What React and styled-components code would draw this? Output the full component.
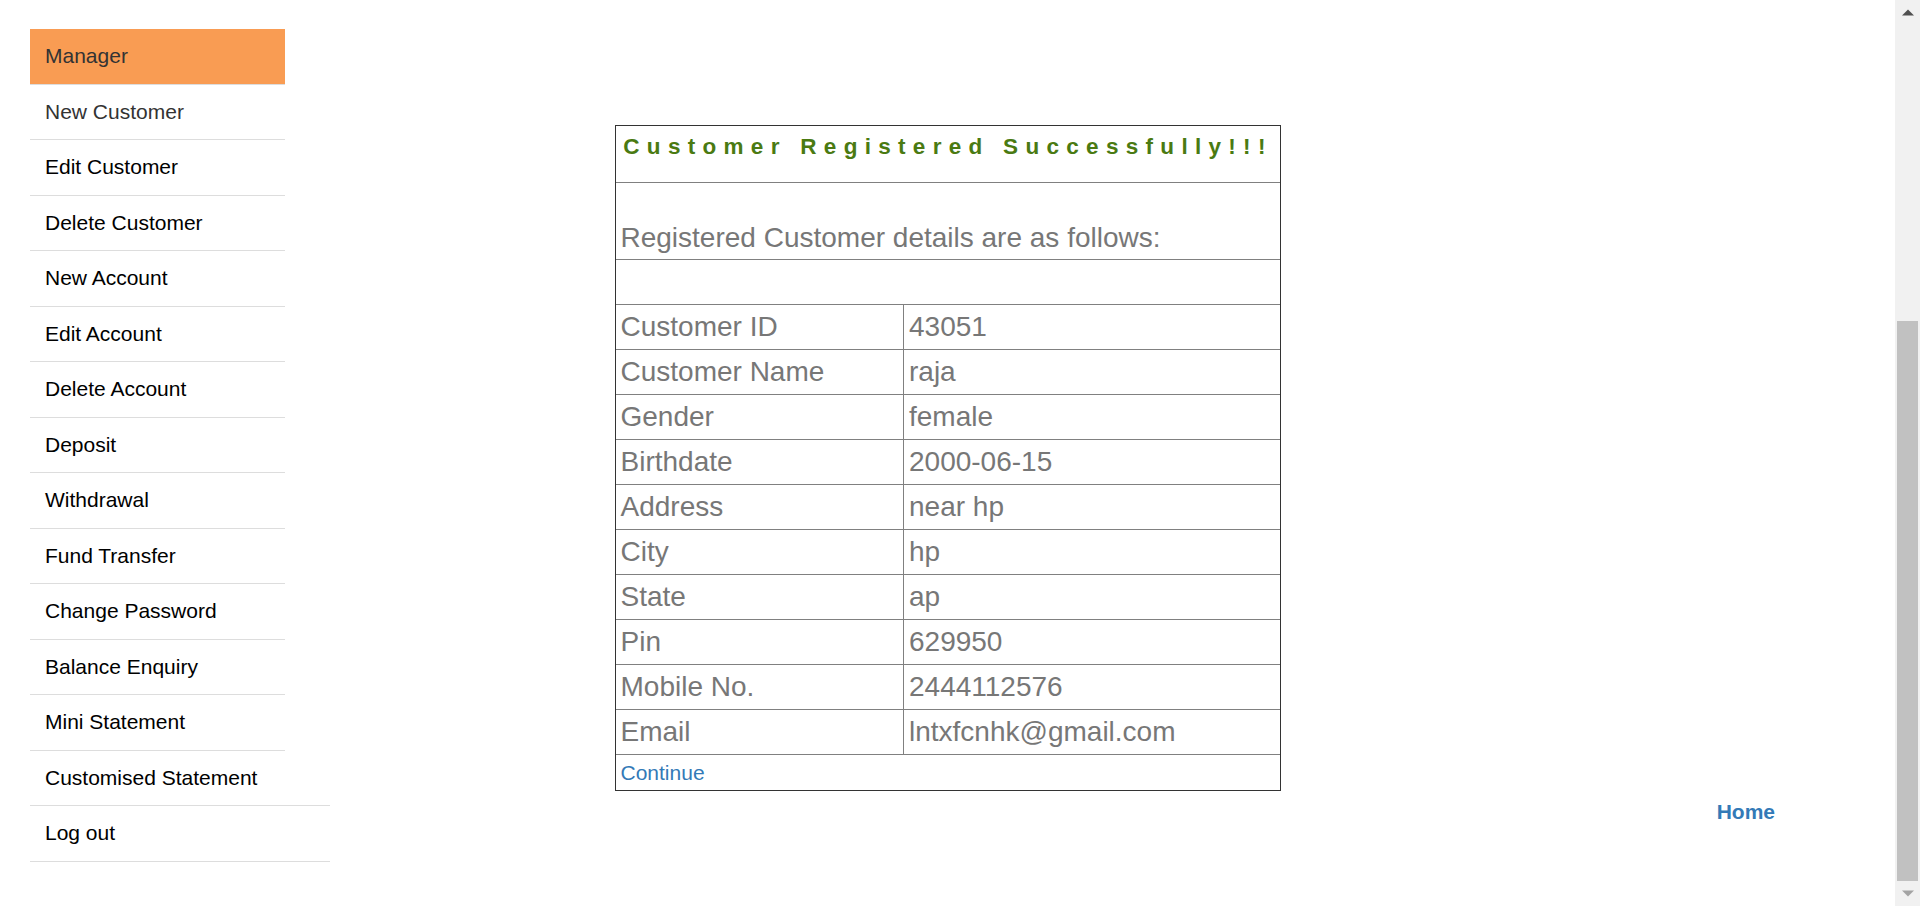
import React from 'react';
import styled, { createGlobalStyle } from 'styled-components';

const GlobalStyle = createGlobalStyle`
  html, body {
    margin: 0;
    padding: 0;
    background: #fff;
    overflow: hidden;
  }
  body {
    font-family: "Liberation Sans", Arial, sans-serif;
  }
`;

const menu = [
  'New Customer',
  'Edit Customer',
  'Delete Customer',
  'New Account',
  'Edit Account',
  'Delete Account',
  'Deposit',
  'Withdrawal',
  'Fund Transfer',
  'Change Password',
  'Balance Enquiry',
  'Mini Statement',
];

const details = [
  ['Customer ID', '43051'],
  ['Customer Name', 'raja'],
  ['Gender', 'female'],
  ['Birthdate', '2000-06-15'],
  ['Address', 'near hp'],
  ['City', 'hp'],
  ['State', 'ap'],
  ['Pin', '629950'],
  ['Mobile No.', '2444112576'],
  ['Email', 'lntxfcnhk@gmail.com'],
];

const App = () => {
  return (
    <>
      <GlobalStyle />
      <Page>
        <Sidebar>
          <MenuItem active>Manager</MenuItem>
          {menu.map((m, i) => (
            <MenuItem key={m} muted={i === 0}>{m}</MenuItem>
          ))}
          <MenuItem wide>Customised Statement</MenuItem>
          <MenuItem wide>Log out</MenuItem>
        </Sidebar>

        <Main>
          <Card>
            <TitleRow>Customer Registered Successfully!!!</TitleRow>
            <InfoRow>Registered Customer details are as follows:</InfoRow>
            <EmptyRow />
            {details.map(([label, value]) => (
              <DataRow key={label}>
                <LabelCell>{label}</LabelCell>
                <ValueCell>{value}</ValueCell>
              </DataRow>
            ))}
            <FooterRow>
              <Link href="#">Continue</Link>
            </FooterRow>
          </Card>
          <HomeBar>
            <HomeLink href="#">Home</HomeLink>
          </HomeBar>
        </Main>

        <Scrollbar>
          <ArrowButton>
            <svg width="12" height="7" viewBox="0 0 12 7">
              <polygon points="0,6.5 6,0.5 12,6.5" fill="#505050" />
            </svg>
          </ArrowButton>
          <Track>
            <Thumb />
          </Track>
          <ArrowButton>
            <svg width="12" height="7" viewBox="0 0 12 7">
              <polygon points="0,0.5 12,0.5 6,6.5" fill="#a3a3a3" />
            </svg>
          </ArrowButton>
        </Scrollbar>
      </Page>
    </>
  );
};

export default App;

const Page = styled.div`
  display: flex;
  height: 906px;
  width: 1920px;
  overflow: hidden;
`;

const Sidebar = styled.ul`
  list-style: none;
  margin: 29px 0 0 30px;
  padding: 0;
  width: 300px;
  flex-shrink: 0;
`;

const MenuItem = styled.li`
  width: ${(p) => (p.wide ? '300px' : '255px')};
  box-sizing: border-box;
  padding: 12.25px 15px;
  line-height: 30px;
  font-size: 21px;
  color: ${(p) => (p.active || p.muted ? '#333' : '#000')};
  background: ${(p) => (p.active ? '#f99c53' : 'transparent')};
  border-bottom: 1px solid #ddd;
  white-space: nowrap;
`;

const Main = styled.div`
  flex: 1;
  display: flex;
  flex-direction: column;
  padding-top: 125px;
`;

const Card = styled.div`
  margin-left: 285px;
  width: 666px;
  box-sizing: border-box;
  border: 1px solid #333;
  font-size: 28px;
  color: #777;
`;

const Row = styled.div`
  border-bottom: 1px solid #808080;
  box-sizing: border-box;
`;

const TitleRow = styled(Row)`
  height: 57px;
  padding: 7.5px 4.5px 0;
  text-align: center;
  font-size: 22.5px;
  line-height: 26px;
  font-weight: bold;
  letter-spacing: 7.3px;
  color: #4a7a12;
  white-space: nowrap;
`;

const InfoRow = styled(Row)`
  height: 77px;
  padding: 38.5px 4.5px 0;
  line-height: 31px;
`;

const EmptyRow = styled(Row)`
  height: 45px;
`;

const DataRow = styled(Row)`
  display: grid;
  grid-template-columns: 288px 1fr;
  height: 45px;
  line-height: 44px;
`;

const LabelCell = styled.div`
  padding: 0 4.5px;
  border-right: 1px solid #808080;
`;

const ValueCell = styled.div`
  padding: 0 5px;
`;

const FooterRow = styled.div`
  height: 35px;
  padding: 6px 4.5px 0;
  box-sizing: border-box;
  line-height: 24px;
  font-size: 21px;
`;

const Link = styled.a`
  color: #337ab7;
  text-decoration: none;
`;

const HomeBar = styled.div`
  display: flex;
  justify-content: flex-end;
  margin-top: 6px;
  padding-right: 120px;
`;

const HomeLink = styled.a`
  color: #337ab7;
  font-weight: bold;
  font-size: 21px;
  line-height: 30px;
  text-decoration: none;
`;

const Scrollbar = styled.div`
  width: 25px;
  flex-shrink: 0;
  background: #f1f1f1;
  display: flex;
  flex-direction: column;
`;

const ArrowButton = styled.div`
  height: 25px;
  display: flex;
  align-items: center;
  justify-content: center;
`;

const Track = styled.div`
  flex: 1;
  display: flex;
  flex-direction: column;
  justify-content: flex-end;
`;

const Thumb = styled.div`
  height: 560px;
  margin: 0 2px;
  background: #c1c1c1;
`;
